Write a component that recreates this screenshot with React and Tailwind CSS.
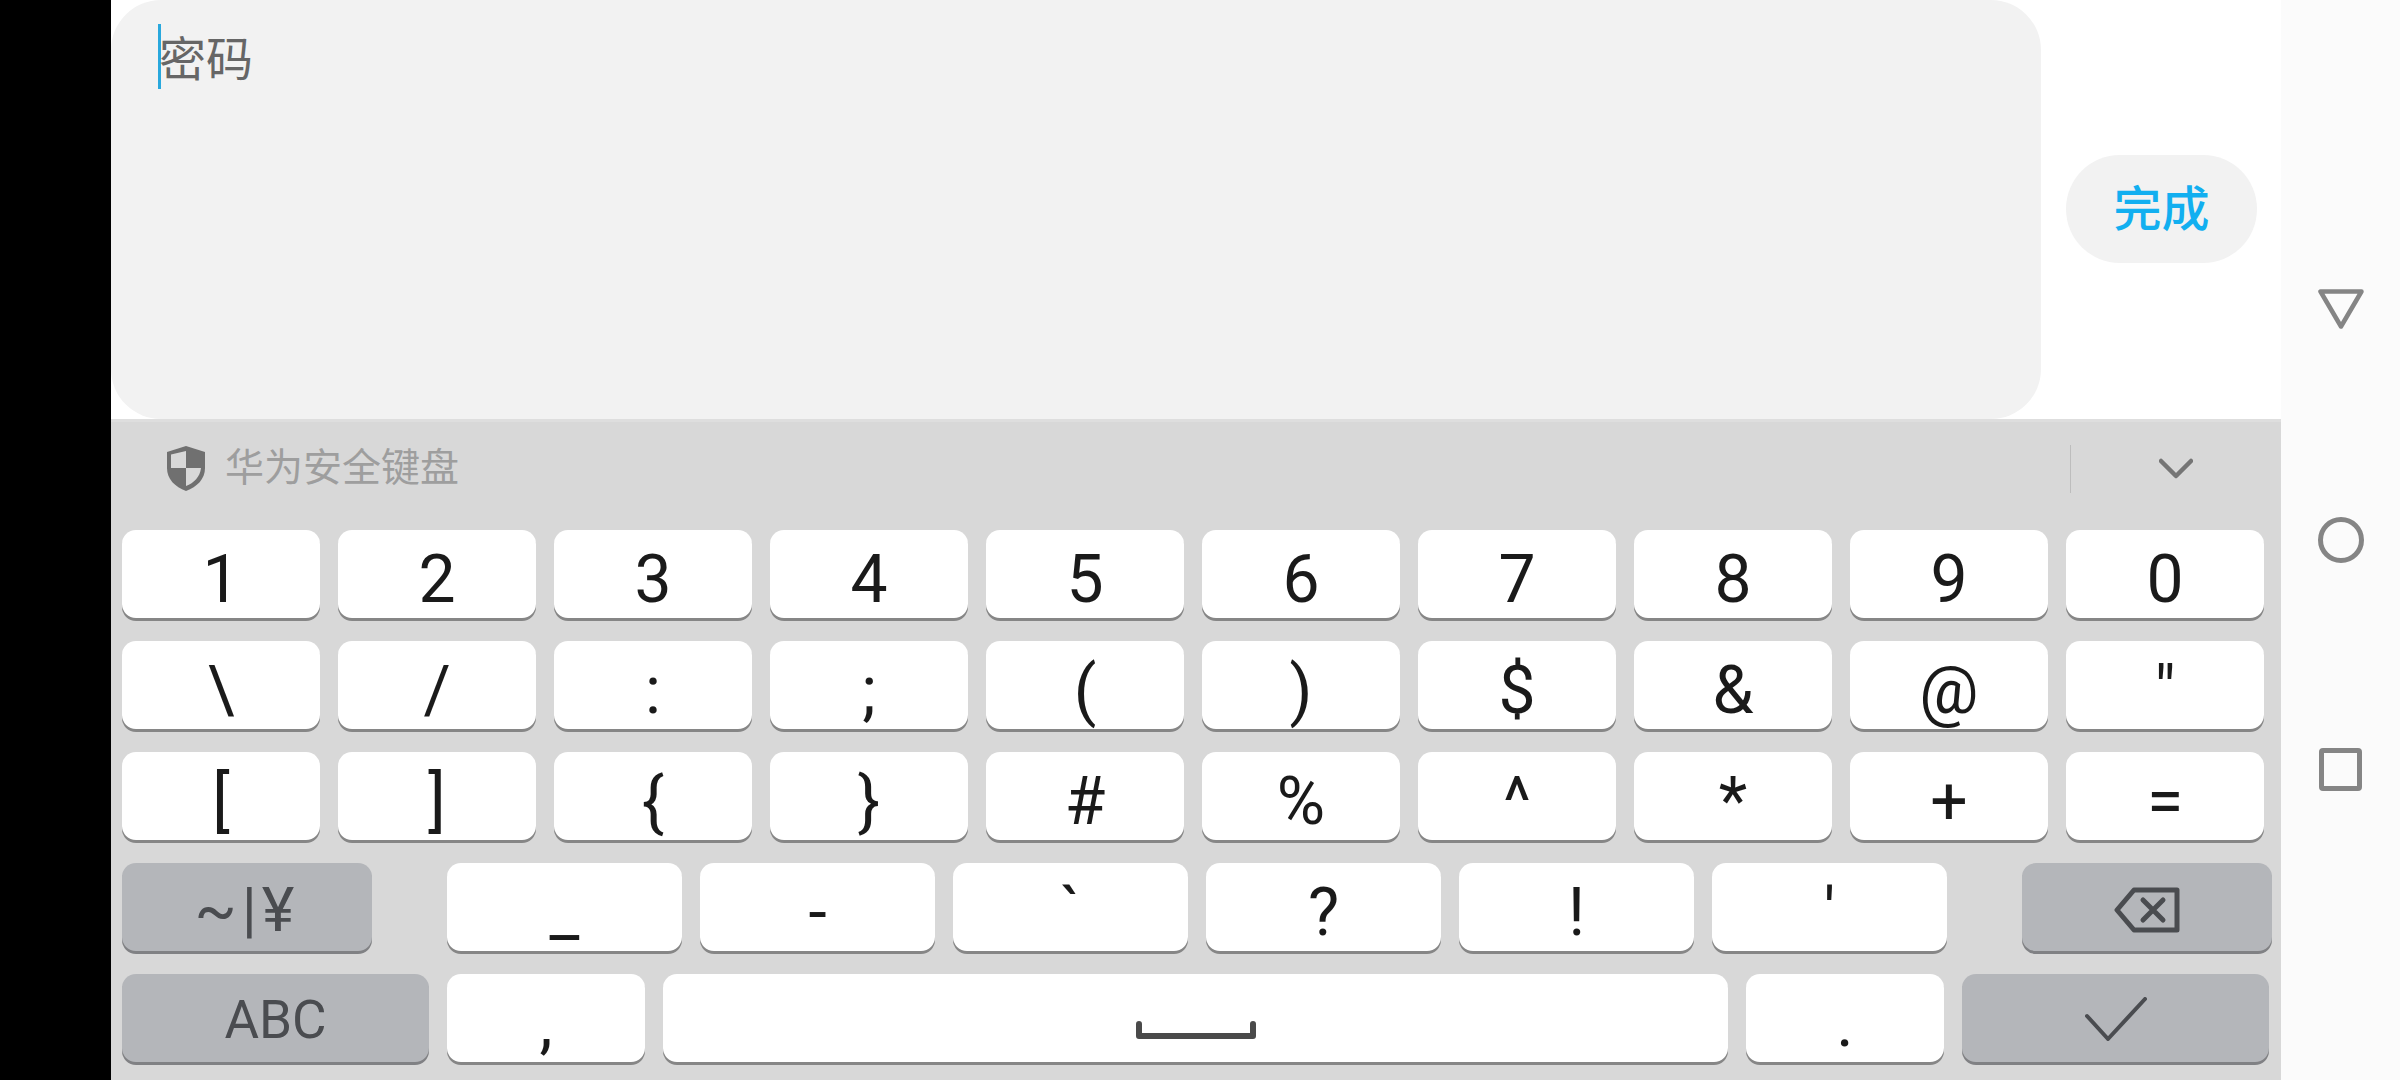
import React from 'react';

const rows = [
  ['1', '2', '3', '4', '5', '6', '7', '8', '9', '0'],
  ['\\', '/', ':', ';', '(', ')', '$', '&', '@', '"'],
  ['[', ']', '{', '}', '#', '%', '^', '*', '+', '='],
];
const midKeys = ['_', '-', '`', '?', '!', "'"];

const Key = ({ className = 'pt-[11px] text-[66px]', width, children, dark }) => (
  <div
    className={`h-[88px] shrink-0 rounded-[14px] flex items-center justify-center leading-none ${
      dark
        ? 'bg-[#b4b6ba] text-[#4a4c50] shadow-[0_3px_0_#808184]'
        : 'bg-white text-[#1a1a1a] shadow-[0_3px_0_#868686]'
    } ${width} ${className}`}
  >
    {children}
  </div>
);

const BackspaceIcon = () => (
  <svg width="66" height="46" viewBox="0 0 66 46" fill="none" stroke="#4a4c50" strokeWidth="5" strokeLinejoin="round" strokeLinecap="round">
    <path d="M20 3H63V43H20L3 23Z" />
    <path d="M29 13L49 33M49 13L29 33" />
  </svg>
);

const CheckIcon = () => (
  <svg width="62" height="44" viewBox="0 0 62 44" fill="none" stroke="#4a4c50" strokeWidth="4" strokeLinecap="round" strokeLinejoin="round">
    <path d="M2 19L23 42L60 2" />
  </svg>
);

const SpaceIcon = () => (
  <svg width="120" height="18" viewBox="0 0 120 18" fill="none" stroke="#4a4a4a" strokeWidth="6" strokeLinecap="round" strokeLinejoin="round">
    <path d="M3 3V15H117V3" />
  </svg>
);

const ShieldIcon = () => (
  <svg width="38" height="45" viewBox="0 0 38 45">
    <path d="M19 0L38 6V22C38 33 30 41 19 45C8 41 0 33 0 22V6Z" fill="#707070" />
    <path d="M19 5V22H4V8.5ZM19 22H34C33 31 27 37 19 40Z" fill="#d8d8d8" />
  </svg>
);

export default function App() {
  return (
    <div className="flex w-[2400px] h-[1080px] bg-black overflow-hidden font-['Roboto','Noto_Sans_CJK_SC',sans-serif]">
      <div className="w-[111px] shrink-0 bg-black" />

      <main className="w-[2170px] shrink-0 flex flex-col bg-white">
        <div className="h-[419px] flex items-center">
          <div className="w-[1930px] h-[419px] shrink-0 bg-[#f2f2f2] rounded-[50px] pl-[47px] pt-[24px]">
            <div className="flex items-start">
              <div className="w-[3px] h-[65px] bg-[#29a8dd]" />
              <span className="ml-[-2px] mt-[7px] text-[47px] leading-[58px] text-[#666666]">密码</span>
            </div>
          </div>
          <div className="ml-[25px] w-[191px] h-[108px] mb-[2px] pt-[2px] rounded-[54px] bg-[#f2f2f2] flex items-center justify-center text-[48px] font-medium text-[#12aff0]">
            完成
          </div>
        </div>

        <div className="flex-1 bg-[#d8d8d8] border-t-[3px] border-[#dedede] pl-[11px]">
          <div className="h-[93px] mb-[15px] flex items-center">
            <div className="ml-[45px] flex items-center">
              <ShieldIcon />
              <span className="ml-[20px] text-[39px] text-[#9e9e9e]">华为安全键盘</span>
            </div>
            <div className="ml-auto w-px h-[48px] bg-[#bdbdbd]" />
            <svg className="ml-[88px] mr-[88px]" width="34" height="22" viewBox="0 0 34 22" fill="none" stroke="#757575" strokeWidth="4.5" strokeLinecap="round" strokeLinejoin="round">
              <path d="M2 3L17 18L32 3" />
            </svg>
          </div>

          <div className="flex flex-col gap-[23px]">
            {rows.map((row, index) => (
              <div key={index} className="flex gap-[18px]">
                {row.map((label) => (
                  <Key key={label} width="w-[198px]">{label}</Key>
                ))}
              </div>
            ))}

            <div className="flex">
              <Key dark width="w-[250px]" className="pt-[6px] text-[62px] tracking-[5px]">~|¥</Key>
              <div className="ml-[75px] flex gap-[18px]">
                {midKeys.map((label) => (
                  <Key key={label} width="w-[235px]">{label}</Key>
                ))}
              </div>
              <div className="ml-[75px]">
                <Key dark width="w-[250px]" className="pt-[5px]"><BackspaceIcon /></Key>
              </div>
            </div>

            <div className="flex gap-[18px]">
              <Key dark width="w-[307px]" className="pt-[4px] text-[53px]">ABC</Key>
              <Key width="w-[198px]">,</Key>
              <Key width="w-[1065px]" className="pt-[24px]"><SpaceIcon /></Key>
              <Key width="w-[198px]">.</Key>
              <Key dark width="w-[307px]" className="pt-[2px]"><CheckIcon /></Key>
            </div>
          </div>
        </div>
      </main>

      <aside className="flex-1 bg-[#fbfbfb] flex flex-col items-center pt-[289px]">
        <svg width="46" height="40" viewBox="0 0 46 40" fill="none" stroke="#858585" strokeWidth="4.5" strokeLinejoin="round">
          <path d="M2.5 2.5H43.5L23 37.5Z" />
        </svg>
        <div className="mt-[188px] w-[46px] h-[46px] rounded-full border-[5px] border-[#858585]" />
        <div className="mt-[185px] w-[43px] h-[43px] rounded-[4px] border-[5px] border-[#858585]" />
      </aside>
    </div>
  );
}
